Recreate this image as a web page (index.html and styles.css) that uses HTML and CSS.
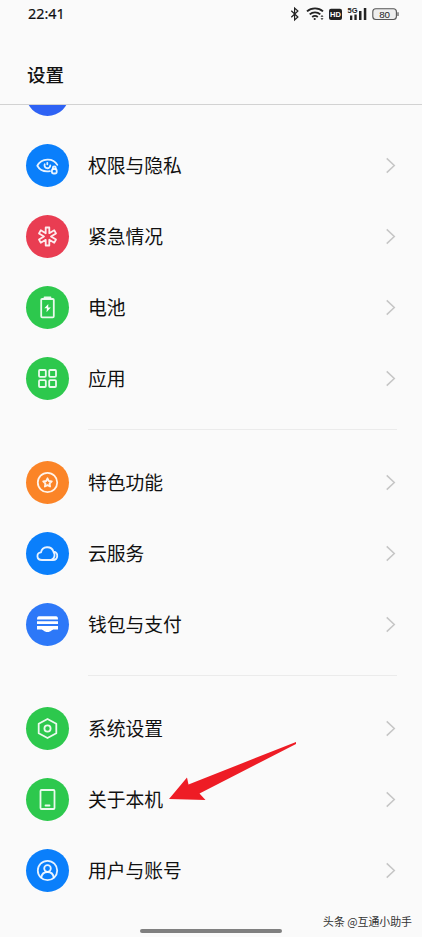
FILE: index.html
```html
<!DOCTYPE html>
<html lang="zh-CN">
<head>
<meta charset="utf-8">
<title>设置</title>
<link rel="stylesheet" href="styles.css">
</head>
<body>
<div class="phone">
  <header class="header">
    <div class="status">
      <span class="time">22:41</span>
      <svg class="status-icons" viewBox="288 0 112 28" width="112" height="28" fill="none" stroke="#222" stroke-width="1.2">
        <path d="M291.300 10.800l6.600 6.200-3.300 3V8l3.300 3-6.600 6.200"/>
        <g stroke-width="1.900">
          <path d="M307 11.400a12 12 0 0 1 16 0M309.700 14.400a8 8 0 0 1 10.600 0M312.200 17a4.500 4.500 0 0 1 5.600 0"/>
        </g>
        <circle cx="314.700" cy="19" r="1.100" fill="#222" stroke="none"/>
        <path d="M320.500 16.700l1.500-1.700 1.500 1.700zM320.500 18.300l1.500 1.700 1.500-1.700z" fill="#222" stroke="none"/>
        <rect x="329" y="8.700" width="13" height="11.300" rx="2" fill="#222" stroke="none"/>
        <g fill="#222" stroke="none">
          <rect x="350" y="15.500" width="2.300" height="4.500"/>
          <rect x="354.400" y="14.500" width="2.300" height="5.500"/>
          <rect x="359" y="11" width="2.500" height="9"/>
          <rect x="363.800" y="8" width="2.500" height="12"/>
        </g>
        <rect x="372.800" y="8.800" width="23.600" height="10.700" rx="3" fill="#eee" stroke="#555" stroke-width="1.100"/>
        <path d="M398 12.300v3.600" stroke="#555"/>
        <text class="hd" x="335.500" y="17.300">HD</text>
        <text class="net" x="352.500" y="13">5G</text>
        <text class="charge" x="384.600" y="17.600">80</text>
      </svg>
    </div>
    <h1 class="title">设置</h1>
  </header>

  <main class="list">
    <div class="row row-cut"><span class="icon royal"></span></div>
    <div class="row">
      <svg class="icon blue" viewBox="0 0 43 43"><path d="M24 27.200c-6 1-10.500-1.500-12.700-5.400 4.200-7.800 15.800-8.300 20-.9"/><path d="M18.700 20.300a2.900 2.900 0 1 0 5.600 1M21.300 18.800v1.500"/><rect x="25.900" y="25" width="4.800" height="4.500" rx="1.800"/><path d="M26.800 25v-1a1.500 1.500 0 0 1 3 0v1"/></svg>
      <span class="label">权限与隐私</span><svg class="chevron" viewBox="0 0 11 18"><path d="M1.500 1.500L9.500 9l-8 7.500"/></svg>
    </div>
    <div class="row">
      <svg class="icon red" viewBox="0 0 43 43"><path d="M19.700 12.500h3.600v5.700l4.900-2.900 1.800 3.100-5 3.100 5 3.100-1.800 3.100-4.900-2.900v5.700h-3.600v-5.700l-4.900 2.900-1.800-3.100 5-3.100-5-3.100 1.800-3.100 4.900 2.900z"/></svg>
      <span class="label">紧急情况</span><svg class="chevron" viewBox="0 0 11 18"><path d="M1.500 1.500L9.500 9l-8 7.500"/></svg>
    </div>
    <div class="row">
      <svg class="icon green" viewBox="0 0 43 43"><rect x="15.200" y="13" width="12.600" height="18.300" rx="1"/><path d="M18.500 11.500h6"/><path class="solid" d="M22.300 18l-4 4.300h2.600l-.4 4 4.300-4.700h-2.600z"/></svg>
      <span class="label">电池</span><svg class="chevron" viewBox="0 0 11 18"><path d="M1.500 1.500L9.500 9l-8 7.500"/></svg>
    </div>
    <div class="row">
      <svg class="icon green" viewBox="0 0 43 43"><rect x="13" y="13" width="6.800" height="6.800" rx="1"/><rect x="23.200" y="13" width="6.800" height="6.800" rx="1"/><rect x="13" y="23.200" width="6.800" height="6.800" rx="1"/><rect x="23.200" y="23.200" width="6.800" height="6.800" rx="1"/></svg>
      <span class="label">应用</span><svg class="chevron" viewBox="0 0 11 18"><path d="M1.500 1.500L9.500 9l-8 7.500"/></svg>
    </div>
    <hr class="divider">
    <div class="row">
      <svg class="icon orange" viewBox="0 0 43 43"><circle cx="21.500" cy="21.500" r="9.700"/><path d="M21.500 17.300l1.300 2.700 3 .4-2.200 2.100.5 3-2.600-1.400-2.600 1.400.5-3-2.200-2.100 3-.4z"/></svg>
      <span class="label">特色功能</span><svg class="chevron" viewBox="0 0 11 18"><path d="M1.500 1.500L9.500 9l-8 7.500"/></svg>
    </div>
    <div class="row">
      <svg class="icon blue" viewBox="0 0 43 43"><path d="M16 28c-6 0-5.800-7.200-1-7.600 1-6.500 10.500-7 12.500-.7 5.300.8 4.800 8.300-.5 8.300zM27.400 19.700c2 3 1.500 6.300-2 8.200"/></svg>
      <span class="label">云服务</span><svg class="chevron" viewBox="0 0 11 18"><path d="M1.500 1.500L9.500 9l-8 7.500"/></svg>
    </div>
    <div class="row">
      <svg class="icon wallet" viewBox="0 0 43 43"><path class="solid" d="M13 13.200h17q2 0 2 3.300H11q0-3.300 2-3.300zM11 18.200h21v2.900H11zM11 22.900h21v3.600h-4c-2.500 0-2.700 2.500-6.500 2.500s-4-2.500-6.500-2.500h-4z"/></svg>
      <span class="label">钱包与支付</span><svg class="chevron" viewBox="0 0 11 18"><path d="M1.500 1.500L9.500 9l-8 7.500"/></svg>
    </div>
    <hr class="divider">
    <div class="row">
      <svg class="icon green" viewBox="0 0 43 43"><path d="M21.500 12l8.800 4.800v9.400L21.500 31l-8.800-4.800v-9.400z"/><circle cx="21.500" cy="21.500" r="3.100"/></svg>
      <span class="label">系统设置</span><svg class="chevron" viewBox="0 0 11 18"><path d="M1.500 1.500L9.500 9l-8 7.500"/></svg>
    </div>
    <div class="row">
      <svg class="icon green" viewBox="0 0 43 43"><rect x="14.500" y="12" width="14" height="19" rx="1"/><path d="M19.500 27.500h4"/></svg>
      <span class="label">关于本机</span><svg class="chevron" viewBox="0 0 11 18"><path d="M1.500 1.500L9.500 9l-8 7.500"/></svg>
    </div>
    <div class="row">
      <svg class="icon blue" viewBox="0 0 43 43"><circle cx="21.500" cy="21.500" r="9.700"/><circle cx="21.500" cy="19.500" r="3.300"/><path d="M15.300 28.500c.5-3.800 3-5.500 6.200-5.500s5.700 1.700 6.200 5.500"/></svg>
      <span class="label">用户与账号</span><svg class="chevron" viewBox="0 0 11 18"><path d="M1.500 1.500L9.500 9l-8 7.500"/></svg>
    </div>
  </main>

  <svg class="arrow" viewBox="0 0 130 62"><path d="M128 2L20.500 44.500 19 37.500 1 59l36.500 1-6-6.500L128 4z"/></svg>
  <div class="watermark">头条 @互通小助手</div>
  <div class="home-bar"></div>
</div>
</body>
</html>
```
FILE: styles.css
```css
* { box-sizing: border-box; }
body {
  margin: 0;
  background: #fafafa;
  color: #111;
  font-family: "Noto Sans CJK SC", sans-serif;
}
.phone {
  position: relative;
  width: 422px;
  height: 937px;
  overflow: hidden;
  background: #fafafa;
}
.header {
  height: 105px;
  border-bottom: 1px solid #d2d2d2;
}
.status {
  display: flex;
  justify-content: space-between;
  align-items: center;
  height: 28px;
  padding: 0 22px 0 28px;
}
.time {
  font: 400 14.4px/28px "Noto Sans", sans-serif;
  -webkit-text-stroke: .2px #111;
}
.status-icons text {
  stroke: none;
  text-anchor: middle;
  font-family: "Liberation Sans", sans-serif;
}
.status-icons .hd { fill: #fff; font-size: 7.5px; font-weight: bold; }
.status-icons .net { fill: #222; font-size: 7.5px; font-weight: bold; }
.status-icons .charge { fill: #222; font-size: 9.8px; }
.title {
  margin: 32px 0 0 27px;
  font-size: 18.5px;
  line-height: 28px;
  font-weight: 500;
}
.list {
  height: 832px;
  overflow: hidden;
}
.row {
  display: flex;
  align-items: center;
  height: 71px;
  padding: 0 25px 0 26px;
}
.row-cut { margin-top: -46px; }
.icon {
  flex: none;
  width: 43px;
  height: 43px;
  border-radius: 50%;
  fill: none;
  stroke: #fff;
  stroke-opacity: .9;
  stroke-width: 1.8;
  stroke-linecap: round;
  stroke-linejoin: round;
}
.icon .solid { fill: #fff; stroke: none; }
.royal { background: #2e62f4; }
.blue { background: #0a7ffb; }
.red { background: #e93d52; }
.green { background: #2dc84d; }
.orange { background: #fb8427; }
.wallet { background: #2d78f8; }
.label {
  flex: 1;
  margin-left: 19px;
  padding-bottom: 1px;
  font-size: 18.8px;
  line-height: 28px;
}
.chevron {
  width: 11px;
  height: 17px;
  margin: 0 1px 1px 0;
  fill: none;
  stroke: #c6c6c6;
  stroke-width: 1.6;
}
.divider {
  height: 1px;
  margin: 15px 25px 17px 88px;
  border: 0;
  background: #ebebeb;
}
.arrow {
  position: absolute;
  left: 168px;
  top: 740px;
  width: 130px;
  height: 62px;
  fill: #ee1c25;
}
.watermark {
  position: absolute;
  right: 10px;
  bottom: 7px;
  font-size: 10.9px;
  line-height: 18px;
  color: #333;
  white-space: nowrap;
}
.home-bar {
  position: absolute;
  left: 140px;
  bottom: 4px;
  width: 142px;
  height: 4px;
  border-radius: 2px;
  background: #808080;
}
```
